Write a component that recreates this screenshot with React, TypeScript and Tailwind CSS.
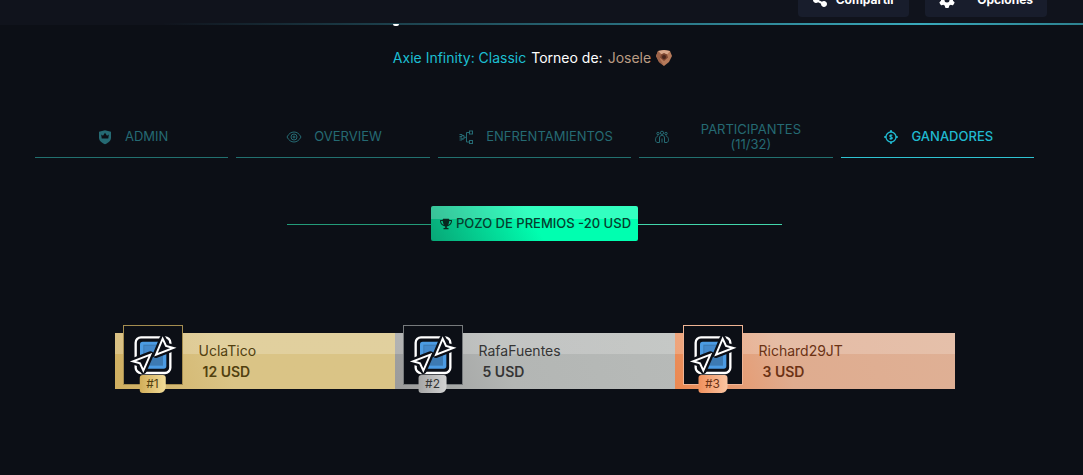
import type { ReactNode } from "react";
import { FaShareNodes, FaGear, FaTrophy } from "react-icons/fa6";

function ShieldIcon() {
  return (
    <svg viewBox="0 0 16 16" className="h-4 w-4 shrink-0" fill="none" aria-hidden="true">
      <path d="M8 1.2 14 2.8V8.5C14 11.7 11.5 13.8 8 15.2 4.5 13.8 2 11.7 2 8.5V2.8Z" fill="currentColor" />
      <path d="M4.2 5.6 6 6.8 8 3.8 10 6.8 11.8 5.6 11.3 9.4H4.7Z" fill="#0c0f16" />
    </svg>
  );
}

function EyeIcon() {
  return (
    <svg viewBox="0 0 16 16" className="h-4 w-4 shrink-0" fill="none" stroke="currentColor" aria-hidden="true">
      <path d="M1 8C2.8 4.6 5.2 3 8 3s5.200 1.600 7 5c-1.800 3.400-4.200 5-7 5S2.800 11.400 1 8Z" />
      <circle cx="8" cy="8" r="3" />
      <circle cx="8" cy="8" r="1" />
    </svg>
  );
}

function BracketIcon() {
  return (
    <svg viewBox="0 0 16 16" className="h-4 w-4 shrink-0" fill="none" stroke="currentColor" aria-hidden="true">
      <path d="M1.500 5.500h2.500v2H1.500M1.500 9h2.500v2H1.500M4 6.500h2v3.500H4M6 8.300h2.500M11.500 3.500h-3v9.500h3" />
      <rect x="11.500" y="2" width="3" height="3" />
      <rect x="11.500" y="11.500" width="3" height="3" />
    </svg>
  );
}

function PeopleIcon() {
  return (
    <svg viewBox="0 0 16 16" className="h-4 w-4 shrink-0" fill="none" stroke="currentColor" aria-hidden="true">
      <circle cx="8" cy="3.800" r="1.600" />
      <circle cx="4" cy="4.500" r="1.200" />
      <circle cx="12" cy="4.500" r="1.200" />
      <path d="M5.500 13.500V9C5.500 7.300 6.500 6.300 8 6.300s2.500 1 2.500 2.700v4.500M4.300 6.500C2.300 7.500 1.500 9 1.500 10.800c0 1.500.6 2.200 1.500 2.700h2.500M11.700 6.500c2 1 2.800 2.500 2.800 4.300 0 1.500-.6 2.200-1.500 2.700h-2.500M8 9.500v4" />
    </svg>
  );
}

function PrizeIcon() {
  return (
    <svg viewBox="0 0 16 16" className="h-4 w-4 shrink-0" fill="none" stroke="currentColor" aria-hidden="true">
      <circle cx="8" cy="8" r="5" strokeWidth="1.300" />
      <path d="M7 2.200h2M7 13.800h2M2.200 7v2M13.800 7v2" strokeWidth="1.800" />
      <path d="M9.300 6.600C8.900 5.900 6.700 5.900 6.700 7S9.400 7.900 9.400 9.100 7.100 10.200 6.600 9.400M8 5.200v5.600" strokeWidth="1.100" />
    </svg>
  );
}

function RankGem() {
  return (
    <svg viewBox="0 0 16 16" className="h-4 w-4 shrink-0" aria-hidden="true">
      <path d="M2 1 8 0l6 1 2 5-3 6-5 4-5-4-3-6Z" fill="#b67a5a" />
      <path d="M2 1 8 0l6 1-2.500 3H5Z" fill="#d9a78b" />
      <path d="M2 1 5 4 4 9l4 7-5-4-3-6Z" fill="#9c6248" />
      <path d="m5 4.500 3-1.500 3 1.500 1 3L8 11 4 7.500Z" fill="#7b4430" />
      <circle cx="8" cy="7" r="2" fill="#48251c" />
    </svg>
  );
}

function AvatarArt() {
  return (
    <svg viewBox="3 3 174 174" className="h-full w-full" fill="none" aria-hidden="true">
      <rect x="38" y="37" width="104" height="107" rx="16" stroke="#fff" strokeWidth="7" />
      <rect x="51" y="50" width="79" height="81" rx="8" fill="#4b9be3" />
      <path d="M61 59h59v63H61Z" fill="#3d7ab2" />
      <path d="M64 62h50L64 116Z" fill="#4489cb" />
      <g stroke="#0c0f16" strokeWidth="20" strokeLinejoin="round">
        <path d="M119 41 129 63 151 69 99 89Z" />
        <path d="M82 89 30 109 51 115 61 137Z" />
        <path d="M82 89 99 89" strokeWidth="12" />
      </g>
      <g fill="#0c0f16" stroke="#fff" strokeWidth="6">
        <path d="M119 41 129 63 151 69 99 89Z" />
        <path d="M82 89 30 109 51 115 61 137Z" />
      </g>
    </svg>
  );
}

type Tab = { label: string; icon: ReactNode; active?: boolean };

const tabs: Tab[] = [
  { label: "ADMIN", icon: <ShieldIcon /> },
  { label: "OVERVIEW", icon: <EyeIcon /> },
  { label: "ENFRENTAMIENTOS", icon: <BracketIcon /> },
  { label: "PARTICIPANTES (11/32)", icon: <PeopleIcon /> },
  { label: "GANADORES", icon: <PrizeIcon />, active: true },
];

const winners = [
  {
    name: "UclaTico",
    prize: "12 USD",
    rank: "#1",
    card: "from-[#cfae5f] via-[#dac486] to-[#dac486] text-[#51400f]",
    border: "border-[#a58d50]",
    badge: "from-[#d2ae59] to-[#f2dc98]",
  },
  {
    name: "RafaFuentes",
    prize: "5 USD",
    rank: "#2",
    card: "from-[#9b9b9b] via-[#b3b6b4] to-[#b7bab8] text-[#353535]",
    border: "border-[#777a7c]",
    badge: "from-[#a5a5a5] to-[#d2d2d2]",
  },
  {
    name: "Richard29JT",
    prize: "3 USD",
    rank: "#3",
    card: "from-[#ec8850] via-[#dfac8f] to-[#dfb095] text-[#6b3214]",
    border: "border-[#f0b494]",
    badge: "from-[#f0905c] to-[#fac5a2]",
  },
];

export default function App() {
  return (
    <div className="min-h-screen bg-[#0c0f16] font-['Inter',sans-serif] text-white">
      <header className="bg-[#10131c]">
        <div className="flex h-[23px] items-end justify-end gap-4 overflow-hidden pr-9 pb-[6px]">
          <button className="flex h-[34px] shrink-0 items-center gap-2 rounded-sm bg-[#181d2c] px-[14px] text-xs font-bold">
            <FaShareNodes className="h-4 w-4" />
            Compartir
          </button>
          <button className="flex h-[34px] shrink-0 items-center gap-[22px] rounded-sm bg-[#181d2c] px-[14px] text-xs font-bold">
            <FaGear className="h-4 w-4" />
            Opciones
          </button>
        </div>
        <div className="h-[2px] bg-linear-to-r from-transparent from-15% via-[#39a9bb] via-85% to-[#2d8290]" />
      </header>

      <main className="flex flex-col pr-[49px] pl-[35px]">
        <div className="relative flex h-[66px] items-center justify-center pr-1 text-sm">
          <span className="absolute top-[-1px] left-[358px] h-[2px] w-[6px] rounded-b-full bg-white" />
          <p className="flex items-center gap-[5px]">
            <a href="#juego" className="text-[#1cbfd2]">Axie Infinity: Classic</a>
            <span>Torneo de:</span>
            <a href="#organizador" className="text-[#bb9c83]">Josele</a>
            <RankGem />
          </p>
        </div>

        <nav className="mt-[25px] grid grid-cols-5 gap-2">
          {tabs.map((tab) => (
            <button
              key={tab.label}
              className={
                tab.active
                  ? "flex h-[42px] items-center justify-center gap-3 border-b border-[#2fc3d2] pr-[13px] pl-[15px] text-[13px] leading-[15px] font-medium text-[#20b9d0]"
                  : "flex h-[42px] items-center justify-center gap-3 border-b border-[#22706f] pr-[13px] pl-[15px] text-[13px] leading-[15px] text-[#256a73]"
              }
            >
              {tab.icon}
              <span>{tab.label}</span>
            </button>
          ))}
        </nav>

        <div className="mx-auto mt-12 flex w-full max-w-[495px] items-center">
          <div className="mt-px h-px flex-1 bg-[#239b79]" />
          <div className="flex h-[35px] items-center gap-1 rounded-xs bg-[linear-gradient(180deg,#ffffff33_37%,transparent_37%),linear-gradient(60deg,#08a676,#00ffb0_50%)] pr-[7px] pl-[9px] text-[13px] font-medium text-[#073d2e]">
            <FaTrophy className="h-3 w-3 text-[#08271f]" />
            POZO DE PREMIOS -20 USD
          </div>
          <div className="mt-px h-px flex-1 bg-[#42d6ab]" />
        </div>

        <ol className="mx-auto mt-[92px] grid w-full max-w-[840px] grid-cols-3">
          {winners.map((w) => (
            <li key={w.rank} className={`h-14 bg-linear-70 via-40% ${w.card}`}>
              <div className="flex h-full items-center gap-4 bg-[linear-gradient(180deg,#ffffff33_37%,transparent_37%)] px-2">
                <div className={`relative -mt-3 h-[60px] w-[60px] shrink-0 border bg-[#0c0f16] ${w.border}`}>
                  <AvatarArt />
                  <span
                    className={`absolute -bottom-[9px] left-1/2 -translate-x-1/2 rounded-[3px] rounded-br-md bg-linear-to-r px-[7px] text-xs leading-[18px] ${w.badge}`}
                  >
                    {w.rank}
                  </span>
                </div>
                <div className="flex flex-col text-sm leading-[21px]">
                  <span>{w.name}</span>
                  <strong className="pl-1 font-semibold">{w.prize}</strong>
                </div>
              </div>
            </li>
          ))}
        </ol>
      </main>
    </div>
  );
}
